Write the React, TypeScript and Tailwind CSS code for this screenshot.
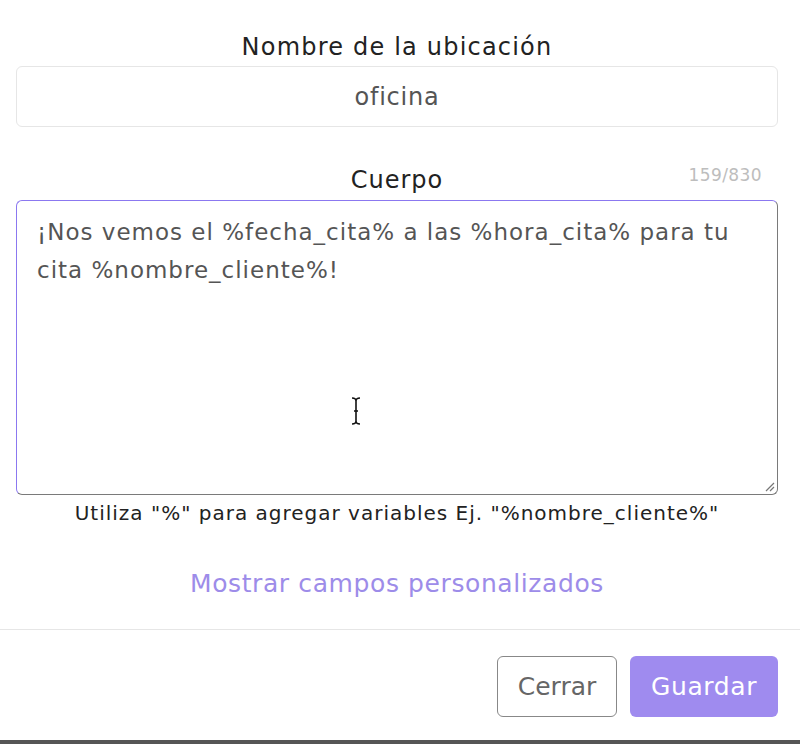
import React from 'react'

const body =
  '¡Nos vemos el %fecha_cita% a las %hora_cita% para tu cita %nombre_cliente%!'

export default function App() {
  return (
    <div className="relative h-[744px] w-[800px] overflow-hidden bg-white font-['DejaVu_Sans',sans-serif] text-[#222]">
      <div className="pl-4 pr-[22px] pt-[30px]">
        {/* Nombre */}
        <div className="text-center text-[24px] leading-[34px] tracking-[1.2px]">Nombre de la ubicación</div>
        <div className="mt-[2px] flex h-[61px] items-center justify-center rounded-md border border-[#e6e6e6] text-[24px] tracking-[0.8px] text-[#555]">
          oficina
        </div>

        {/* Cuerpo */}
        <div className="relative mt-[33px] h-[40px]">
          <div className="pt-[3px] text-center text-[24px] leading-[34px] tracking-[1px]">Cuerpo</div>
          <div className="absolute right-[16px] top-[3px] text-[17px] tracking-[0.4px] text-[#bdbdbd]">159/830</div>
        </div>
        <div className="relative h-[295px] rounded-md border border-t-[#8b78f0] border-l-[#8b78f0] border-r-[#7a7a7a] border-b-[#7a7a7a] px-5 pt-[12px] text-[23px] leading-[38px] tracking-[1px] text-[#555]">
          {body}
          <svg className="absolute bottom-[2px] right-[2px]" width="12" height="12" viewBox="0 0 12 12">
            <path d="M11 3 L3 11 M11 7 L7 11" stroke="#777" strokeWidth="1.2" />
          </svg>
          <svg className="absolute left-[333px] top-[196px]" width="12" height="28" viewBox="0 0 12 28">
            <path
              d="M2 1 Q6 1 6 4 L6 24 Q6 27 2 27 M10 1 Q6 1 6 4 M10 27 Q6 27 6 24 M4 14 L8 14"
              fill="none"
              stroke="#111"
              strokeWidth="1.6"
            />
          </svg>
        </div>
        <div className="mt-[5px] text-center text-[20px] leading-[26px] tracking-[1px]">
          Utiliza "%" para agregar variables Ej. "%nombre_cliente%"
        </div>

        <div className="mt-[42px] text-center text-[25px] leading-[32px] tracking-[0.6px] text-[#9d8ce9]">
          Mostrar campos personalizados
        </div>
      </div>

      <div className="mt-[29px] border-t border-[#e6e6e6]" />

      <div className="flex justify-end gap-[13px] px-[22px] pt-[26px]">
        <button className="h-[61px] w-[120px] rounded-md border border-[#888] text-[25px] text-[#666]">
          Cerrar
        </button>
        <button className="h-[61px] w-[148px] rounded-md bg-[#9f8bef] text-[25px] tracking-[0.6px] text-white">
          Guardar
        </button>
      </div>

      <div className="absolute bottom-0 left-0 h-[4px] w-full bg-[#555]" />
    </div>
  )
}
